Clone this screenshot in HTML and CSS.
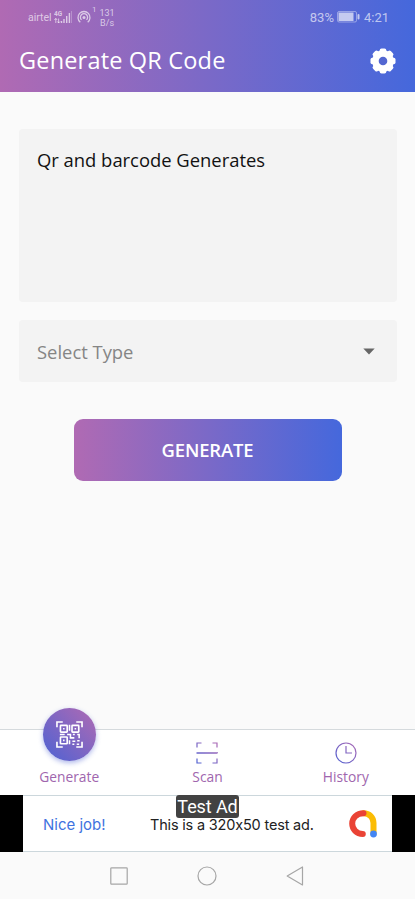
FILE: index.html
```html
<!DOCTYPE html>
<html lang="en">
<head>
<meta charset="utf-8">
<title>Generate QR Code</title>
<link rel="stylesheet" href="styles.css">
</head>
<body>
<div class="screen">
  <header class="header">
    <div class="status">
      <span class="carrier">airtel</span>
      <svg class="signal" width="18" height="14" viewBox="0 0 18 14">
        <text class="tiny" x="0" y="6">4G</text>
        <path d="M1.8 13V8.5M.4 10l1.4-1.600L3.200 10M4.600 8.500V13M3.400 11.500L4.600 13 6 11.500" stroke="currentColor" fill="none" stroke-width=".9"/>
        <path d="M7.500 13v-2M10 13V9M12.700 13V6M15.400 13V3" stroke="currentColor" stroke-width="1.400"/>
        <path d="M17.500 13V1" stroke="currentColor" opacity=".4"/>
      </svg>
      <svg class="hotspot" width="14" height="14" viewBox="0 0 14 14" fill="none" stroke="currentColor" stroke-width="1.300">
        <path d="M3.300 12.200A6 6 0 1 1 10.700 12.200M4.500 9.900A3.600 3.600 0 1 1 9.500 9.900"/>
        <circle cx="7" cy="7.500" r="1.500" fill="currentColor" stroke="none"/>
      </svg>
      <sup class="count">1</sup>
      <span class="speed">131<br>B/s</span>
      <span class="percent">83%</span>
      <svg class="battery" width="23" height="12" viewBox="0 0 23 12">
        <rect x=".5" y=".5" width="19" height="10.500" rx="1.500" fill="none" stroke="currentColor" opacity=".6"/>
        <rect x="1.500" y="1.500" width="15" height="8.500" fill="currentColor"/>
        <rect x="20.500" y="3" width="2" height="5.500" rx="1" fill="currentColor"/>
      </svg>
      <span class="clock">4:21</span>
    </div>
    <div class="titlebar">
      <h1>Generate QR Code</h1>
      <svg class="gear" width="26" height="26" viewBox="-13 -13 26 26">
        <g fill="#fff">
          <rect x="-3.300" y="-12.500" width="6.600" height="25" rx="1.800"/>
          <rect x="-3.300" y="-12.500" width="6.600" height="25" rx="1.800" transform="rotate(45)"/>
          <rect x="-3.300" y="-12.500" width="6.600" height="25" rx="1.800" transform="rotate(90)"/>
          <rect x="-3.300" y="-12.500" width="6.600" height="25" rx="1.800" transform="rotate(135)"/>
          <circle r="10.800"/>
        </g>
        <circle r="4.300" fill="#5367d1"/>
      </svg>
    </div>
  </header>

  <main class="content">
    <div class="field note"><span>Qr and barcode Generates</span></div>
    <div class="field select">
      <span>Select Type</span>
      <svg width="12" height="7" viewBox="0 0 12 7"><path d="M.3.500h11.400L6 6.400z" fill="#666"/></svg>
    </div>
    <button class="generate"><span>GENERATE</span></button>
  </main>

  <nav class="tabs">
    <div class="tab active">
      <div class="bubble">
        <svg width="27" height="27" viewBox="0 0 28 28" fill="none" stroke="#fff" stroke-width="1.700">
          <path d="M1 6.500V1h6M21 1h6v5.500M1 21.500V27h6M21 27h6v-5.500"/>
          <rect x="4.600" y="4.600" width="7" height="7" rx=".6"/>
          <rect x="16.600" y="4.600" width="7" height="7" rx=".6"/>
          <rect x="4.600" y="16.600" width="7" height="7" rx=".6"/>
          <path d="M14 4v6M4 14h5M11.500 14H15v3.500h4M17.500 14h2M22 14h2v4M14 20v4M17 21h3M22 20.500h2.500M17 24.200h2M21.500 24.200h2.500" stroke-width="1.600"/>
          <path d="M7.300 8.100h1.600M19.300 8.100h1.600M7.300 20.100h1.600" stroke-width="1.600"/>
        </svg>
      </div>
      <span class="label">Generate</span>
    </div>
    <div class="tab">
      <svg class="icon" width="22" height="22" viewBox="0 0 22 22" fill="none">
        <defs><linearGradient id="tint" gradientUnits="userSpaceOnUse" x1="0" y1="22" x2="22" y2="0"><stop stop-color="#4d62d3"/><stop offset="1" stop-color="#b06ab3"/></linearGradient></defs>
        <path d="M1 5.500V1h4.500M16.500 1H21v4.500M1 16.500V21h4.500M16.500 21H21v-4.500" stroke="url(#tint)" stroke-width="1.200"/>
        <path d="M.5 11h21v.01" stroke="url(#tint)" stroke-width="1.600"/>
      </svg>
      <span class="label">Scan</span>
    </div>
    <div class="tab">
      <svg class="icon" width="22" height="22" viewBox="0 0 22 22" fill="none" stroke="url(#tint)" stroke-width="1.200">
        <circle cx="11" cy="11" r="10"/><path d="M11 4v7h6"/>
      </svg>
      <span class="label">History</span>
    </div>
  </nav>

  <section class="ad">
    <div class="banner">
      <span class="nice">Nice job!</span>
      <span class="adtext">This is a 320x50 test ad.</span>
      <svg class="admob" width="30" height="30" viewBox="0 0 30 30" fill="none" stroke-width="6" stroke-linecap="round">
        <path d="M15.500 4.200C21.500 4.200 25.500 8.500 25.500 14V24.500" stroke="#fbbc04"/>
        <path d="M15.500 4.200C8.500 4.200 4.200 9 4.200 14.500S8.500 25 14.800 25" stroke="#ea4335"/>
        <circle cx="25.500" cy="25" r="3.400" fill="#4285f4"/>
      </svg>
    </div>
    <span class="testad">Test Ad</span>
  </section>

  <footer class="system">
    <svg width="18" height="18" viewBox="0 0 18 18" fill="none" stroke="#a6a6a6" stroke-width="1.200"><rect x=".8" y=".8" width="16.400" height="16.400" rx=".8"/></svg>
    <svg width="20" height="20" viewBox="0 0 20 20" fill="none" stroke="#a6a6a6" stroke-width="1.200"><circle cx="10" cy="10" r="9"/></svg>
    <svg width="18" height="20" viewBox="0 0 18 20" fill="none" stroke="#a6a6a6" stroke-width="1.200" stroke-linejoin="round"><path d="M16.500 1v18L1.200 10z"/></svg>
  </footer>
</div>
</body>
</html>
```

FILE: styles.css
```css
* { box-sizing: border-box; }
body { margin: 0; background: #fafafa; font-family: "Open Sans", "Noto Sans", sans-serif; }
.screen { width: 415px; height: 899px; display: flex; flex-direction: column; overflow: hidden; }
span { white-space: nowrap; }
svg { display: block; flex: none; }

.header { height: 92px; flex: none; background: linear-gradient(90deg, #b06ab3, #4568dc); color: #fff; }
.status { height: 34px; display: flex; align-items: center; padding: 0 26px 0 28px; font-family: Roboto, sans-serif; color: rgba(255, 255, 255, .65); }
.carrier { font-size: 10.5px; width: 24px; margin-right: 2px; }
.signal { margin-right: 5px; }
.tiny { font: 700 6.5px Roboto, sans-serif; fill: currentColor; }
.count { font-size: 8px; line-height: 8px; align-self: flex-start; margin: 6px 3px 0 1px; }
.speed { font-size: 9px; line-height: 10px; text-align: center; margin-top: 2px; }
.percent { font-size: 13px; margin-left: auto; margin-right: 3px; }
.battery { margin-right: 4px; }
.clock { font-size: 13px; }
.titlebar { height: 53px; display: flex; align-items: center; justify-content: space-between; padding: 0 19px; }
h1 { margin: 0; padding-bottom: 2px; font-size: 23.5px; font-weight: 400; letter-spacing: .18px; white-space: nowrap; }

.content { flex: 1; padding: 37px 18px 0; display: flex; flex-direction: column; }
.field { background: #f3f3f3; border-radius: 4px; margin-left: 1px; font-size: 18.4px; }
.note { height: 173px; padding: 18px; line-height: 26px; color: #111; }
.select { height: 62px; margin-top: 18px; padding: 0 22px 0 18px; display: flex; align-items: center; justify-content: space-between; color: #858585; }
.generate { width: 268px; height: 62px; margin: 37px 0 0 55.5px; padding: 0 0 2px; border: 0; border-radius: 9px; background: linear-gradient(90deg, #b06ab3, #4568dc); color: #fff; font: 600 18.4px "Open Sans", sans-serif; letter-spacing: -.1px; }

.tabs { height: 66px; flex: none; display: grid; grid-template-columns: repeat(3, 1fr); background: #fff; border-top: 1px solid #d5dadd; }
.tab { display: flex; flex-direction: column; align-items: center; padding-top: 12px; }
.active { padding-top: 0; }
.bubble { width: 53px; height: 53px; margin-top: -22px; border-radius: 50%; display: flex; align-items: center; justify-content: center; background: linear-gradient(45deg, #4d62d3, #b06ab3); box-shadow: 0 2px 5px rgba(77, 98, 211, .45); }
.label { font-size: 13.8px; line-height: 20px; margin-top: 3px; color: #a066ae; }
.active .label { margin-top: 6px; }

.ad { height: 57px; flex: none; position: relative; background: #000; padding: 0 23px; }
.banner { height: 57px; background: #fff; border-top: 1px solid #ccd7dc; border-bottom: 1px solid #ccd7dc; display: flex; align-items: center; padding: 2px 14px 0 20px; font-family: Inter, sans-serif; font-size: 15px; font-feature-settings: "calt" 0; }
.nice { width: 107px; color: #3f73e0; }
.adtext { color: #222; font-size: 14.5px; letter-spacing: -.18px; }
.admob { margin: -2px 0 0 auto; }
.testad { position: absolute; left: 176px; top: 0; width: 63px; height: 23px; border-radius: 3px; background: #424242; color: #fff; font: 18px/24px Roboto, sans-serif; letter-spacing: -.1px; text-align: center; }
.system { height: 47px; flex: none; display: flex; align-items: center; justify-content: center; gap: 69px; padding-right: 1px; }
```
